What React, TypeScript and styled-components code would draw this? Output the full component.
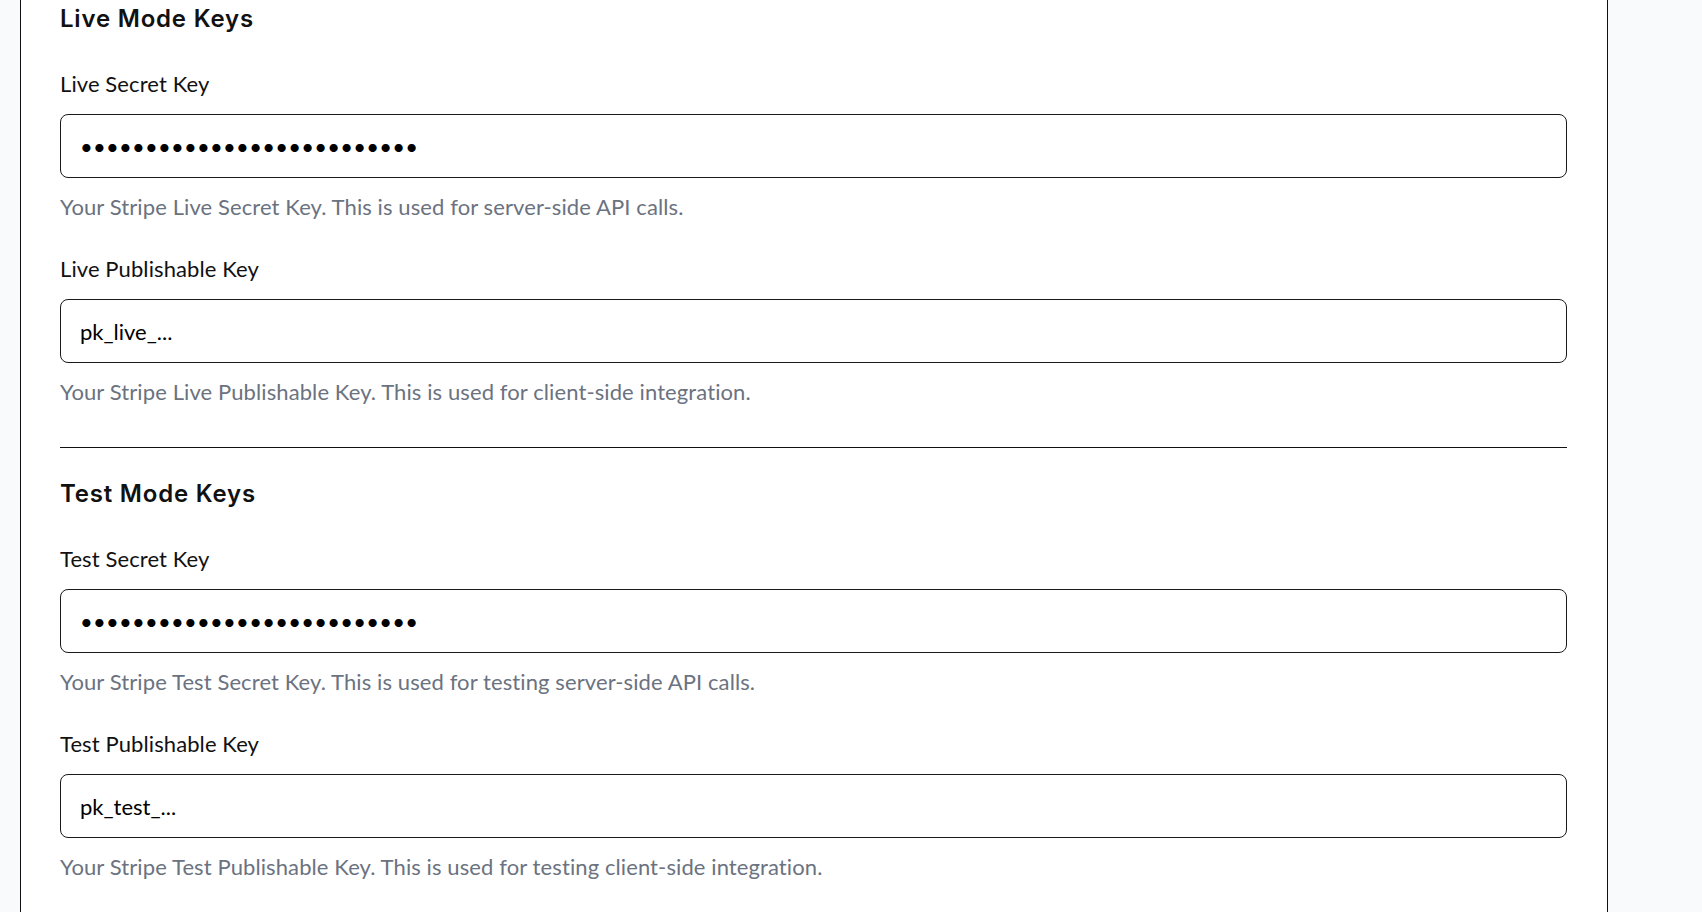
import * as React from 'react'
import styled, { createGlobalStyle } from 'styled-components'

const GlobalStyle = createGlobalStyle`
  html, body {
    margin: 0;
    padding: 0;
    overflow: hidden;
    background: #f9fafb;
  }
  * {
    box-sizing: border-box;
  }
`

type KeyField = {
    id: string
    label: string
    value: string
    secret?: boolean
    help: string
}

const liveFields: KeyField[] = [
    {
        id: 'liveSecret',
        label: 'Live Secret Key',
        value: 'sk_live_51HxQ2eLkdIwHu7ixA',
        secret: true,
        help: 'Your Stripe Live Secret Key. This is used for server-side API calls.',
    },
    {
        id: 'livePublishable',
        label: 'Live Publishable Key',
        value: 'pk_live_...',
        help: 'Your Stripe Live Publishable Key. This is used for client-side integration.',
    },
]

const testFields: KeyField[] = [
    {
        id: 'testSecret',
        label: 'Test Secret Key',
        value: 'sk_test_51HxQ2eLkdIwHu7ixA',
        secret: true,
        help: 'Your Stripe Test Secret Key. This is used for testing server-side API calls.',
    },
    {
        id: 'testPublishable',
        label: 'Test Publishable Key',
        value: 'pk_test_...',
        help: 'Your Stripe Test Publishable Key. This is used for testing client-side integration.',
    },
]

function KeySection({ title, fields }: { title: string; fields: KeyField[] }) {
    return (
        <Section>
            <SectionTitle>{title}</SectionTitle>
            <Fields>
                {fields.map((f) => (
                    <Field key={f.id}>
                        <Label htmlFor={f.id}>{f.label}</Label>
                        <KeyInput
                            id={f.id}
                            type={f.secret ? 'password' : 'text'}
                            $secret={!!f.secret}
                            defaultValue={f.value}
                            readOnly
                        />
                        <Help>{f.help}</Help>
                    </Field>
                ))}
            </Fields>
        </Section>
    )
}

function App() {
    return (
        <Page>
            <GlobalStyle />
            <Panel>
                <KeySection title="Live Mode Keys" fields={liveFields} />
                <Divider />
                <KeySection title="Test Mode Keys" fields={testFields} />
            </Panel>
        </Page>
    )
}

export default App

const Page = styled.div`
    padding-left: 20px;
    height: 912px;
`
const Panel = styled.div`
    width: 1588px;
    height: 100%;
    background: #fff;
    border-left: 1px solid #111;
    border-right: 1px solid #111;
    padding: 2px 40px 0 39px;
`
const Section = styled.section`
    display: flex;
    flex-direction: column;
`
const SectionTitle = styled.h2`
    margin: 0 0 35px;
    padding-top: 1px;
    font-family: Inter, "Liberation Sans", sans-serif;
    font-size: 24px;
    line-height: 32px;
    font-weight: 600;
    letter-spacing: 0.8px;
    color: #111;
`
const Fields = styled.div`
    display: flex;
    flex-direction: column;
    gap: 34px;
`
const Field = styled.div`
    display: flex;
    flex-direction: column;
`
const Label = styled.label`
    font-family: Lato, "Liberation Sans", sans-serif;
    font-size: 22px;
    line-height: 28px;
    letter-spacing: 0.1px;
    color: #111;
    margin-bottom: 16px;
`
const KeyInput = styled.input<{ $secret: boolean }>`
    height: 64px;
    width: 100%;
    border: 1px solid #1a1a1a;
    border-radius: 8px;
    padding: 0 19px;
    font-family: Lato, "Liberation Sans", sans-serif;
    font-size: 22px;
    letter-spacing: ${(p) => (p.$secret ? '0.25px' : '0')};
    color: #000;
    background: #fff;
    outline: none;
`
const Help = styled.p`
    margin: 15px 0 0;
    font-family: Lato, "Liberation Sans", sans-serif;
    font-size: 22px;
    line-height: 28px;
    letter-spacing: 0.1px;
    color: #6b7280;
`
const Divider = styled.hr`
    margin: 41px 0 29px;
    border: none;
    border-top: 1px solid #111;
    height: 0;
`
